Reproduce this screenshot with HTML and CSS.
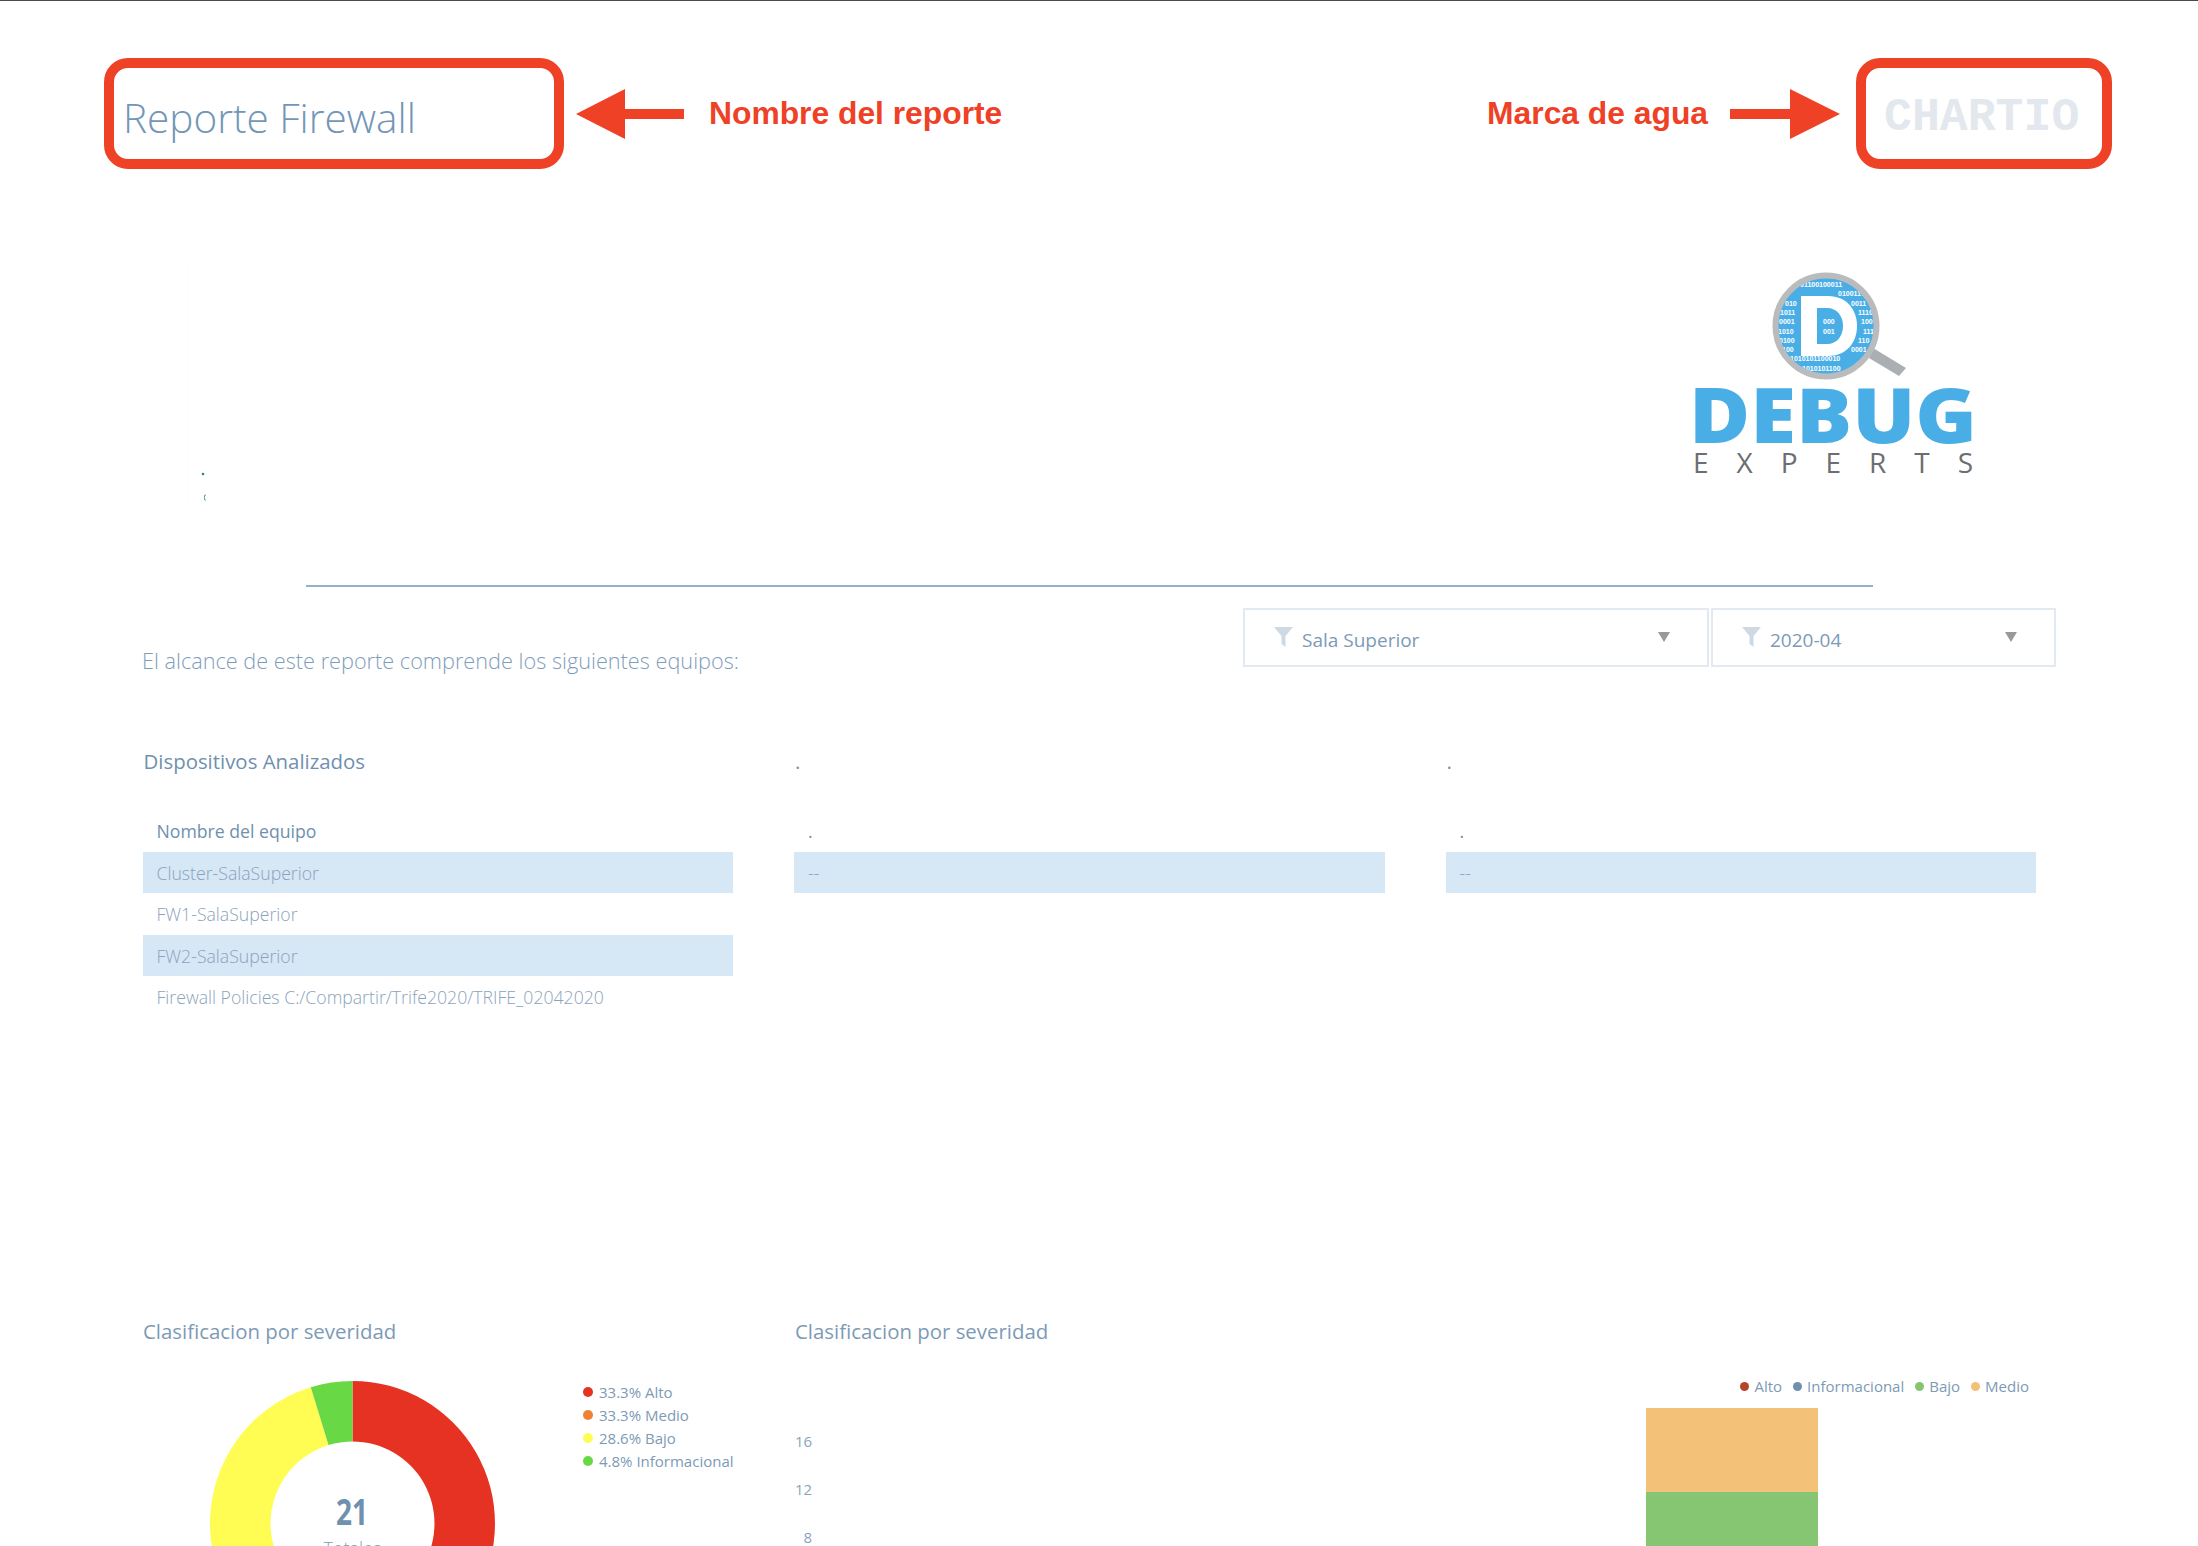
FILE: index.html
```html
<!DOCTYPE html>
<html lang="es">
<head>
<meta charset="utf-8">
<title>Reporte Firewall</title>
<link rel="stylesheet" href="styles.css">
</head>
<body>
<div class="topline"></div>

<header class="annot-bar">
  <div class="callout callout-title"><h1 class="report-title">Reporte Firewall</h1></div>
  <svg class="arrow arrow-left" viewBox="0 0 108 50" width="108" height="50"><polygon points="0,25 49,0 49,20 108,20 108,30 49,30 49,50"/></svg>
  <span class="annot-label annot-left">Nombre del reporte</span>
  <span class="annot-label annot-right">Marca de agua</span>
  <svg class="arrow arrow-right" viewBox="0 0 110 50" width="110" height="50"><polygon points="110,25 60,0 60,20 0,20 0,30 60,30 60,50"/></svg>
  <div class="callout callout-mark"><span class="watermark">CHARTIO</span></div>
</header>

<section class="logo-row">
  <svg class="stray" viewBox="0 0 30 240" width="30" height="240"><rect x="2" y="8" width="1" height="232" fill="#fbfbfb"/><circle cx="18" cy="213" r="1.3" fill="#2a8c6e"/><path d="M20.5 233 A4.5 4.5 0 0 0 20.5 240 L20.5 238.5 A1.8 2.5 0 0 1 20.5 234.5 Z" fill="#2a8c6e"/></svg>
  <svg class="logo" viewBox="0 0 340 230" width="340" height="230">
    <defs><clipPath id="lens"><circle cx="166" cy="65" r="49"/></clipPath></defs>
    <polygon class="logo-handle" points="213,87 246,107 239,115 209,97"/>
    <circle class="logo-blue" cx="166" cy="65" r="50"/>
    <g class="logo-bits" clip-path="url(#lens)">
      <text x="140" y="26">01100100011</text>
      <text x="178" y="35">0100117</text>
      <text x="125" y="45">010</text><text x="191" y="45">0011</text>
      <text x="120" y="54">1011</text><text x="198" y="54">1110</text>
      <text x="119" y="63">0001</text><text x="201" y="63">100</text>
      <text x="118" y="73">1010</text><text x="203" y="73">111</text>
      <text x="119" y="82">0100</text><text x="198" y="82">110</text>
      <text x="122" y="91">100</text><text x="191" y="91">0001</text>
      <text x="130" y="100">1010101100010</text>
      <text x="142" y="110">1010101100</text>
    </g>
    <path class="logo-d" d="M141 35 H168 C187 35 197 49 197 65 C197 82 186 95 168 95 H141 Z"/>
    <path class="logo-blue" d="M157 47 H167 C177 47 183 55 183 65 C183 75 177 83 167 83 H157 Z"/>
    <text class="logo-small" x="163" y="63">000</text>
    <text class="logo-small" x="163" y="73">001</text>
    <circle class="logo-ring" cx="166" cy="65" r="50.5"/>
    <text class="logo-debug" x="29" y="182" textLength="288" lengthAdjust="spacingAndGlyphs">DEBUG</text>
    <text class="logo-experts" x="33" y="212" textLength="280" lengthAdjust="spacing">EXPERTS</text>
  </svg>
</section>

<hr class="divider">

<section class="intro-row">
  <p class="intro">El alcance de este reporte comprende los siguientes equipos:</p>
  <div class="filters">
    <div class="filter filter-wide">
      <svg class="funnel" viewBox="0 0 19 20" width="19" height="20"><path d="M0 0H19L11.5 9V20L7.5 17V9Z"/></svg>
      <span class="filter-text">Sala Superior</span>
      <svg class="caret" viewBox="0 0 12 10" width="12" height="10"><polygon points="0,0 12,0 6,10"/></svg>
    </div>
    <div class="filter filter-narrow">
      <svg class="funnel" viewBox="0 0 19 20" width="19" height="20"><path d="M0 0H19L11.5 9V20L7.5 17V9Z"/></svg>
      <span class="filter-text">2020-04</span>
      <svg class="caret" viewBox="0 0 12 10" width="12" height="10"><polygon points="0,0 12,0 6,10"/></svg>
    </div>
  </div>
</section>

<section class="tables">
  <div class="table-col">
    <h2 class="block-title">Dispositivos Analizados</h2>
    <div class="row row-head">Nombre del equipo</div>
    <div class="row row-alt">Cluster-SalaSuperior</div>
    <div class="row">FW1-SalaSuperior</div>
    <div class="row row-alt">FW2-SalaSuperior</div>
    <div class="row">Firewall Policies C:/Compartir/Trife2020/TRIFE_02042020</div>
  </div>
  <div class="table-col">
    <h2 class="block-title block-dot">.</h2>
    <div class="row row-head">.</div>
    <div class="row row-alt">--</div>
  </div>
  <div class="table-col">
    <h2 class="block-title block-dot">.</h2>
    <div class="row row-head">.</div>
    <div class="row row-alt">--</div>
  </div>
</section>

<section class="charts">
  <div class="chart-donut">
    <h2 class="block-title">Clasificacion por severidad</h2>
    <div class="donut-row">
      <div class="donut-wrap">
        <svg class="donut" viewBox="0 0 285 285" width="285" height="285">
          <path fill="#e63222" d="M142.5 0A142.5 142.5 0 0 1 265.9 213.75L213.5 183.5A82 82 0 0 0 142.5 60.5Z"/>
          <path fill="#f08033" d="M265.9 213.75A142.5 142.5 0 0 1 19.1 213.75L71.5 183.5A82 82 0 0 0 213.5 183.5Z"/>
          <path fill="#fffd54" d="M19.1 213.75A142.5 142.5 0 0 1 100.8 6.2L118.5 64.1A82 82 0 0 0 71.5 183.5Z"/>
          <path fill="#68d945" d="M100.8 6.2A142.5 142.5 0 0 1 142.5 0V60.5A82 82 0 0 0 118.5 64.1Z"/>
        </svg>
        <div class="donut-center"><span class="donut-num">21</span><span class="donut-label">Totales</span></div>
      </div>
      <ul class="pie-legend">
        <li><i class="dot dot-red"></i>33.3% Alto</li>
        <li><i class="dot dot-orange"></i>33.3% Medio</li>
        <li><i class="dot dot-yellow"></i>28.6% Bajo</li>
        <li><i class="dot dot-green"></i>4.8% Informacional</li>
      </ul>
    </div>
  </div>
  <div class="chart-bars">
    <h2 class="block-title">Clasificacion por severidad</h2>
    <ul class="bar-legend">
      <li><i class="dot dot-alto"></i>Alto</li>
      <li><i class="dot dot-info"></i>Informacional</li>
      <li><i class="dot dot-bajo"></i>Bajo</li>
      <li><i class="dot dot-medio"></i>Medio</li>
    </ul>
    <div class="plot">
      <div class="axis"><span>16</span><span>12</span><span>8</span></div>
      <div class="bar"><div class="seg seg-medio"></div><div class="seg seg-bajo"></div></div>
    </div>
  </div>
</section>
</body>
</html>
```

FILE: styles.css
```css
* { box-sizing: border-box; }
html, body { margin: 0; height: 1546px; overflow: hidden; background: #fff; }
body { font-family: "Open Sans", "Noto Sans", sans-serif; color: #7d9ab6; }
h1, h2, p, ul { margin: 0; padding: 0; }
ul { list-style: none; }

.topline { height: 1px; background: #4a4a4a; }

.annot-bar { display: flex; align-items: center; height: 111px; margin-top: 57px; padding: 0 86px 0 104px; }
.callout { height: 111px; border: 10px solid #ee4126; border-radius: 24px; display: flex; align-items: center; flex: none; }
.callout-title { width: 460px; padding: 8px 0 0 9px; }
.callout-mark { width: 256px; padding: 8px 0 0 18px; }
.report-title { font-weight: 300; font-size: 40.5px; line-height: 54px; color: #7396b6; }
.watermark { font-family: "Liberation Mono", monospace; font-weight: 700; font-size: 46.5px; color: #e3e8ee; }
.arrow { flex: none; fill: #ee4126; }
.arrow-left { margin-left: 12px; }
.arrow-right { margin-left: 22px; margin-right: 16px; }
.annot-label { font-family: "Liberation Sans", Arial, sans-serif; font-weight: 700; font-size: 31.8px; color: #ee4126; white-space: nowrap; }
.annot-left { margin-left: 25px; }
.annot-right { margin-left: auto; }

.logo-row { display: flex; justify-content: space-between; align-items: flex-start; height: 230px; margin-top: 92px; padding: 0 198px 0 185px; }
.stray { flex: none; }
.logo { flex: none; }
.logo-blue { fill: #4aaee6; }
.logo-d { fill: #fff; }
.logo-ring { fill: none; stroke: #b9bbbd; stroke-width: 6; }
.logo-handle { fill: #abafb3; }
.logo-bits text { font-family: "Liberation Sans", sans-serif; font-weight: 700; font-size: 7px; fill: #fff; }
.logo-small { font-family: "Liberation Sans", sans-serif; font-weight: 700; font-size: 7px; fill: #fff; }
.logo-debug { font-family: "Open Sans", sans-serif; font-weight: 800; font-size: 77px; fill: #4aaee6; }
.logo-experts { font-family: "Open Sans", sans-serif; font-weight: 400; font-size: 28px; fill: #6d6e71; }

.divider { width: 1567px; height: 2px; margin: 94px 0 0 306px; border: 0; background: #94b1cb; }

.intro-row { display: flex; align-items: flex-start; margin-top: 21px; padding: 0 142px 0 142px; }
.intro { margin-top: 38px; font-weight: 300; font-size: 21.7px; line-height: 30px; color: #7f9dba; }
.filters { display: flex; gap: 2px; margin-left: auto; }
.filter { display: flex; align-items: flex-start; height: 59px; border: 2px solid #e3e9f0; }
.filter-wide { width: 466px; padding: 17px 37px 0 29px; }
.filter-narrow { width: 345px; padding: 17px 37px 0 29px; }
.funnel { flex: none; fill: #cfd9e4; }
.filter-text { margin-left: 9px; font-size: 19px; line-height: 26px; color: #7d9ab6; }
.caret { flex: none; margin-left: auto; margin-top: 5px; fill: #999; }

.tables { display: grid; grid-template-columns: repeat(3, 590.5px); column-gap: 61px; margin-top: 65px; padding-left: 142.5px; }
.block-title { font-weight: 400; font-size: 20.4px; line-height: 40px; color: #6f90ae; }
.table-col .block-title { margin-bottom: 29px; margin-left: 1px; }
.block-dot { margin-left: 2px; }
.row { height: 41.5px; padding-left: 14px; font-weight: 300; font-size: 17.66px; line-height: 43px; color: #8aa3bb; white-space: nowrap; }
.row-head { font-weight: 400; color: #6f90ae; }
.row-alt { background: #d6e7f6; }

.charts { display: flex; margin-top: 293px; padding-left: 143px; }
.chart-donut { width: 652px; flex: none; }
.chart-bars { flex: 1; }
.charts .block-title { color: #7d9ab6; }
.donut-row { display: flex; margin-top: 30px; padding-left: 67px; }
.donut-wrap { position: relative; width: 285px; height: 285px; flex: none; }
.donut { display: block; }
.donut-center { position: absolute; left: 0; right: 0; top: 111px; display: flex; flex-direction: column; align-items: center; }
.donut-num { font-weight: 700; font-size: 35px; line-height: 40px; color: #6f90ae; transform: scaleX(.8); }
.donut-label { font-weight: 300; font-size: 18px; line-height: 30px; margin-top: 1px; color: #7f9dba; }
.pie-legend { margin-left: 88px; font-size: 15px; line-height: 23px; color: #7d9ab6; }
.pie-legend li { display: flex; align-items: center; white-space: nowrap; }
.pie-legend .dot { margin-right: 6px; }
.dot { display: inline-block; width: 10px; height: 10px; border-radius: 50%; flex: none; }
.dot-red { background: #e63222; }
.dot-orange { background: #f08033; }
.dot-yellow { background: #fffd54; }
.dot-green { background: #68d945; }
.dot-alto { background: #b5452a; }
.dot-info { background: #6f90ae; }
.dot-bajo { background: #85c572; }
.dot-medio { background: #f2c078; }
.bar-legend { display: flex; justify-content: flex-end; gap: 11px; height: 22px; margin-top: 24.5px; padding-right: 169px; font-size: 15px; line-height: 22px; color: #7d9ab6; }
.bar-legend li { display: flex; align-items: center; white-space: nowrap; }
.bar-legend .dot { margin-right: 5px; width: 9px; height: 9px; }
.plot { display: flex; align-items: flex-start; margin-top: 10.5px; }
.axis { display: flex; flex-direction: column; width: 17px; flex: none; padding-top: 9px; font-size: 15px; line-height: 48px; text-align: right; color: #8aa3bb; }
.bar { width: 172px; margin-left: 834px; flex: none; }
.seg-medio { height: 84px; background: #f3c177; }
.seg-bajo { height: 100px; background: #86c673; }
```
